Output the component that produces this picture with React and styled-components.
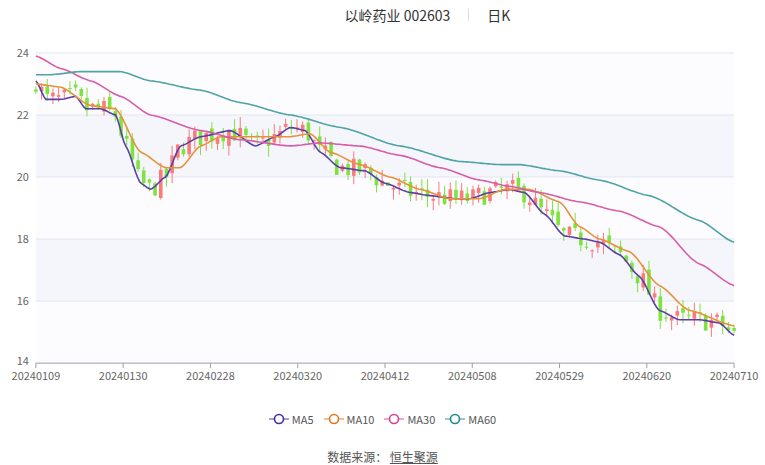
import React from 'react';
import styled, { createGlobalStyle } from 'styled-components';

const Global = createGlobalStyle`
  body { margin: 0; background: #fff; font-family: "Microsoft YaHei", "Noto Sans CJK SC", sans-serif; }
`;

const Page = styled.div`
  width: 765px;
  height: 465px;
  display: flex;
  flex-direction: column;
  align-items: center;
  color: #333;
`;

const Title = styled.div`
  height: 30px;
  display: flex;
  align-items: center;
  gap: 18px;
  font-size: 14px;
  color: #333;
  padding-left: 90px;
`;

const Sep = styled.span`
  width: 1px;
  height: 12px;
  background: #ddd;
`;

const Legend = styled.div`
  margin-top: 27px;
  display: flex;
  gap: 10px;
  font-size: 11px;
  color: #555;
`;

const LegendItem = styled.div`
  display: flex;
  align-items: center;
  gap: 3px;
`;

const Source = styled.div`
  margin-top: 21px;
  font-size: 12px;
  color: #555;
  span { text-decoration: underline; }
`;

const X0 = 35, X1 = 735, Y0 = 53, Y1 = 364;
const py = (v) => Y1 - (v - 14) * (Y1 - Y0) / 10;

const interp = (keys, x) => {
  for (let i = 0; i < keys.length - 1; i++) {
    const [xa, va] = keys[i], [xb, vb] = keys[i + 1];
    if (x >= xa && x <= xb) {
      const t = (x - xa) / (xb - xa);
      const s = t * t * (3 - 2 * t);
      return va + (vb - va) * (0.5 * t + 0.5 * s);
    }
  }
  return keys[keys.length - 1][1];
};

const MA5 = [[35,23.1],[45,22.5],[60,22.5],[75,22.6],[85,22.2],[100,22.2],[115,22.0],[125,21.0],[140,19.8],[150,19.6],[165,20.0],[180,21.0],[200,21.3],[230,21.5],[255,21.0],[275,21.3],[290,21.6],[305,21.5],[320,20.8],[340,20.3],[365,20.2],[385,19.8],[410,19.5],[430,19.4],[455,19.3],[470,19.3],[490,19.5],[510,19.6],[525,19.5],[545,18.8],[565,18.1],[585,18.0],[600,17.9],[620,17.5],[640,16.8],[660,15.7],[680,15.4],[700,15.4],[720,15.3],[735,14.9]];
const MA10 = [[35,23.0],[60,22.9],[90,22.3],[115,22.2],[140,20.8],[165,20.3],[180,20.3],[200,21.0],[220,21.3],[250,21.3],[290,21.3],[310,21.4],[330,20.8],[360,20.4],[390,20.0],[420,19.6],[450,19.3],[480,19.3],[505,19.6],[530,19.6],[560,19.2],[580,18.4],[600,18.0],[630,17.6],[660,16.5],[690,15.7],[735,15.2]];
const MA30 = [[35,23.9],[60,23.5],[90,23.1],[120,22.6],[150,22.0],[200,21.5],[240,21.2],[290,21.0],[320,21.1],[360,21.0],[400,20.7],[440,20.3],[480,19.9],[510,19.7],[540,19.5],[580,19.2],[620,18.9],[660,18.4],[700,17.2],[735,16.5]];
const MA60 = [[35,23.3],[50,23.3],[80,23.4],[120,23.4],[150,23.1],[200,22.8],[240,22.4],[290,22.0],[340,21.6],[400,21.0],[460,20.5],[500,20.4],[520,20.4],[560,20.2],[600,19.9],[650,19.4],[700,18.6],[735,17.9]];

const path = (keys) => {
  let d = '';
  for (let x = X0; x <= X1; x += 2) d += (d ? 'L' : 'M') + x + ',' + py(interp(keys, x)).toFixed(1);
  return d;
};

let seed = 7;
const rnd = () => { seed = (seed * 16807) % 2147483647; return seed / 2147483647; };
const N = 124;
const candles = [];
let prev = 22.7;
for (let i = 0; i < N; i++) {
  const x = X0 + i * (X1 - X0) / (N - 1);
  const base = interp(MA5, x);
  const close = base + (rnd() - 0.5) * 0.7;
  const open = prev + (rnd() - 0.5) * 0.3;
  const hi = Math.max(open, close) + rnd() * 0.35;
  const lo = Math.min(open, close) - rnd() * 0.35;
  candles.push({ x, open, close, hi, lo });
  prev = close;
}

const xLabels = ['20240109','20240130','20240228','20240320','20240412','20240508','20240529','20240620','20240710'];
const lines = [['MA5', '#5b3ea8', MA5], ['MA10', '#e8913a', MA10], ['MA30', '#d85ca8', MA30], ['MA60', '#4fa3a5', MA60]];
const legendColors = { MA5: '#4b2a9e', MA10: '#e2771f', MA30: '#d6409a', MA60: '#1b8a8a' };

const Chart = () => (
  <svg width="765" height="355" viewBox="0 30 765 355">
    <rect x={X0} y={Y0} width={X1 - X0} height={Y1 - Y0} fill="#fcfcfe" />
    <rect x={X0} y={py(22)} width={X1 - X0} height={py(20) - py(22)} fill="#f4f6fb" />
    <rect x={X0} y={py(18)} width={X1 - X0} height={py(16) - py(18)} fill="#f4f6fb" />
    {[24, 22, 20, 18, 16].map((v) => (
      <line key={v} x1={X0} x2={X1} y1={py(v)} y2={py(v)} stroke="#e0e6f1" />
    ))}
    {[24, 22, 20, 18, 16, 14].map((v) => (
      <text key={v} x="28" y={py(v) + (v === 14 ? 2 : 4)} fontSize="11" fill="#666" textAnchor="end">{v}</text>
    ))}
    <line x1={X0} x2={X1} y1={Y1} y2={Y1} stroke="#9aa0ad" />
    {xLabels.map((l, i) => {
      const x = X0 + i * (X1 - X0) / 8;
      return (
        <g key={l}>
          <line x1={x} x2={x} y1={Y1} y2={Y1 + 5} stroke="#9aa0ad" />
          <text x={x} y={Y1 + 17} fontSize="11" fill="#666" textAnchor="middle">{l}</text>
        </g>
      );
    })}
    {candles.map((c, i) => {
      const up = c.close >= c.open;
      const col = up ? '#fb7a7a' : '#7ee33f';
      const top = py(Math.max(c.open, c.close));
      const h = Math.max(1, py(Math.min(c.open, c.close)) - top);
      return (
        <g key={i}>
          <line x1={c.x} x2={c.x} y1={py(c.hi)} y2={py(c.lo)} stroke={col} />
          <rect x={c.x - 1.8} y={top} width="3.6" height={h} fill={col} />
        </g>
      );
    })}
    {lines.map(([n, c, k]) => (
      <path key={n} d={path(k)} fill="none" stroke={c} strokeWidth="1.6" />
    ))}
  </svg>
);

const LegendIcon = ({ color }) => (
  <svg width="20" height="12">
    <line x1="0" x2="20" y1="6" y2="6" stroke={color} strokeWidth="1.5" opacity="0.6" />
    <circle cx="10" cy="6" r="4.5" fill="#fff" stroke={color} strokeWidth="1.6" />
  </svg>
);

export default function App() {
  return (
    <Page>
      <Global />
      <Title>
        <span>以岭药业 002603</span>
        <Sep />
        <span>日K</span>
      </Title>
      <Chart />
      <Legend>
        {Object.entries(legendColors).map(([n, c]) => (
          <LegendItem key={n}><LegendIcon color={c} />{n}</LegendItem>
        ))}
      </Legend>
      <Source>数据来源： <span>恒生聚源</span></Source>
    </Page>
  );
}
